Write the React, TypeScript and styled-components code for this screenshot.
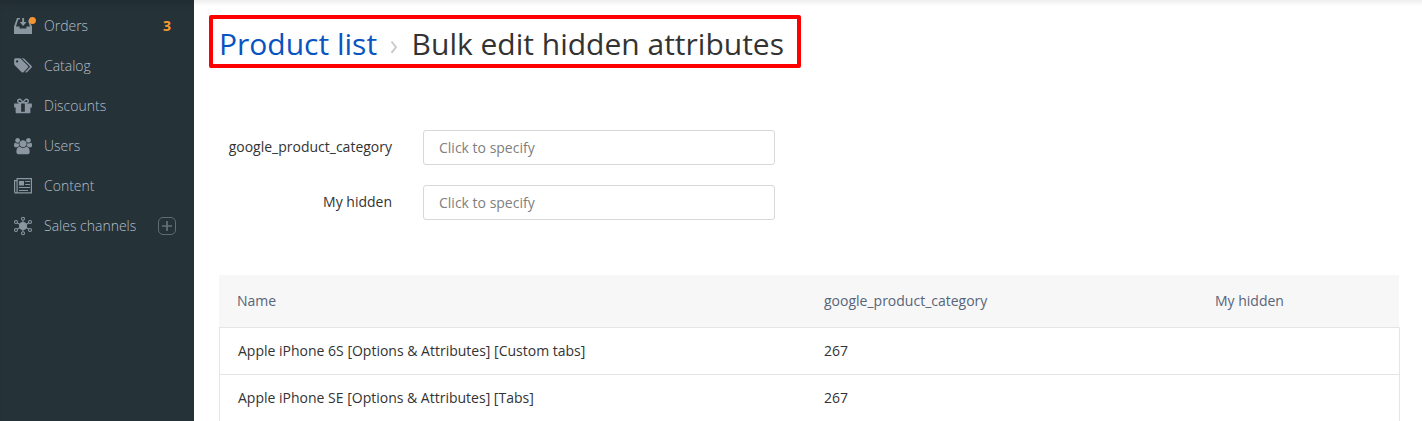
import React from "react";
import styled, { createGlobalStyle } from "styled-components";

const GlobalStyle = createGlobalStyle`
  * { box-sizing: border-box; }
  body {
    margin: 0;
    background: #fff;
    color: #333;
    font-family: "Open Sans", "Noto Sans", sans-serif;
    font-size: 14px;
    line-height: 20px;
    overflow: hidden;
  }
`;

const Page = styled.div`
  display: flex;
  height: 421px;
  overflow: hidden;
`;

const Sidebar = styled.nav`
  flex: none;
  width: 194px;
  padding-top: 6px;
  background: #253238;
  box-shadow: inset 0 8px 8px -6px rgba(0, 0, 0, 0.16);
`;

const NavItem = styled.a`
  display: flex;
  align-items: center;
  height: 40px;
  padding: 0 18px 0 14px;
  color: #b3bfc9;
  font-weight: 300;
`;

const NavIcon = styled.svg`
  flex: none;
  width: 20px;
  height: 20px;
  margin-right: 10px;
  fill: #8c96a0;
  color: #8c96a0;
  overflow: visible;
`;

const NavLabel = styled.span`
  flex: 1;
`;

const Counter = styled.span`
  margin-right: 5px;
  color: #f59b31;
  font-weight: 700;
`;

const AddButton = styled.span`
  display: flex;
  width: 18px;
  height: 18px;
  align-items: center;
  justify-content: center;
  border: 1px solid #606c74;
  border-radius: 5px;
`;

const Main = styled.main`
  flex: 1;
  min-width: 0;
  padding: 15px 22px 0 15px;
  background: linear-gradient(#eeeeee, #ffffff 6px);
`;

const Breadcrumb = styled.h1`
  display: flex;
  align-items: center;
  width: 592px;
  height: 53px;
  margin: 0;
  padding: 0 0 0 6px;
  border: 4px solid #f00;
  border-radius: 2px;
  font-size: 30px;
  line-height: 40px;
  font-weight: 400;
  white-space: nowrap;
`;

const Crumb = styled.span<{ $link?: boolean }>`
  padding-top: 4px;
  color: ${(p) => (p.$link ? "#0854c0" : "#333")};
`;

const Chevron = styled.svg`
  width: 8px;
  height: 14px;
  margin: 10px 13.5px 0 13px;
`;

const Form = styled.form`
  display: grid;
  gap: 20px;
  margin-top: 62px;
`;

const Field = styled.div`
  display: grid;
  grid-template-columns: 183px 352px;
  column-gap: 31px;
`;

const FieldLabel = styled.label`
  padding-top: 7px;
  text-align: right;
`;

const FieldInput = styled.div`
  height: 35px;
  padding: 7px 15px;
  border: 1px solid #d8d8d8;
  border-radius: 3px;
  color: #808080;
`;

const Table = styled.div`
  width: 1181px;
  margin: 55px 0 0 10px;
`;

const HeadRow = styled.div`
  display: grid;
  grid-template-columns: 587px 391px 1fr;
  align-items: center;
  width: 1180px;
  height: 52px;
  padding-left: 18px;
  background: #f7f7f7;
  color: #576479;
`;

const Row = styled.div`
  display: grid;
  grid-template-columns: 586px 391px 1fr;
  align-items: center;
  height: 47px;
  padding-left: 18px;
  border: 1px solid #e5e5e5;
  border-bottom: 0;
`;

const OrdersIcon = () => (
  <NavIcon viewBox="0 0 20 20">
    <path d="M0 10.6 3 2h3.2L5.6 3.4H4.2L2 10.4h3.6v2.2h6.8v-2.2H16L13.9 4.6h1.6L18 10.6V18H0z" />
    <path d="M8.2 2h1.9v4.1h2.5L9.1 9.9 5.7 6.1h2.5z" />
    <circle cx="18.4" cy="4.5" r="3.5" fill="#f79432" />
  </NavIcon>
);

const TagsIcon = () => (
  <NavIcon viewBox="0 0 20 20">
    <g transform="translate(-1.1 1.15) scale(.0094)">
      <path d="M576 448q0-53-37.5-90.5t-90.5-37.5-90.5 37.5-37.5 90.5 37.5 90.5 90.5 37.5 90.5-37.5 37.5-90.5zm1067 576q0 53-37 90l-491 492q-39 37-91 37-53 0-90-37l-715-716q-38-37-64.5-101t-26.5-117v-416q0-52 38-90t90-38h416q53 0 117 26.5t102 64.5l715 714q37 39 37 91zm384 0q0 53-37 90l-491 492q-39 37-91 37-36 0-59-14t-53-45l470-470q37-37 37-90 0-52-37-91l-715-714q-38-38-102-64.5t-117-26.5h224q53 0 117 26.5t102 64.5l715 714q37 39 37 91z" />
    </g>
  </NavIcon>
);

const GiftIcon = () => (
  <NavIcon viewBox="0 0 20 20">
    <g transform="translate(-1.35 .45) scale(.01155 .0109)">
      <path d="M1056 1356v-716h-320v716q0 25 18 38.5t46 13.5h192q28 0 46-13.5t18-38.5zm-456-844h195l-126-161q-26-31-69-31-40 0-68 28t-28 68 28 68 68 28zm688-96q0-40-28-68t-68-28q-43 0-69 31l-125 161h194q40 0 68-28t28-68zm376 256v320q0 14-9 23t-23 9h-96v416q0 40-28 68t-68 28h-1088q-40 0-68-28t-28-68v-416h-96q-14 0-23-9t-9-23v-320q0-14 9-23t23-9h440q-93 0-158.5-65.5t-65.5-158.5 65.5-158.5 158.5-65.5q107 0 168 77l128 165 128-165q61-77 168-77 93 0 158.5 65.5t65.5 158.5-65.5 158.5-158.5 65.5h440q14 0 23 9t9 23z" />
    </g>
  </NavIcon>
);

const UsersIcon = () => (
  <NavIcon viewBox="0 0 20 20">
    <g transform="translate(0 2) scale(.0094 .0091)">
      <path d="M593 896q-162 5-265 128h-134q-82 0-138-40.5t-56-118.5q0-353 124-353 6 0 43.5 21t97.5 42.5 119 21.5q67 0 133-23-5 37-5 66 0 139 81 256zm1071 637q0 120-73 189.5t-194 69.5h-874q-121 0-194-69.5t-73-189.5q0-53 3.5-103.5t14-109 26.5-108.5 43-97.5 62-81 85.5-53.5 111.5-20q10 0 43 21.5t73 48 107 48 135 21.5 135-21.5 107-48 73-48 43-21.5q61 0 111.5 20t85.5 53.5 62 81 43 97.5 26.5 108.5 14 109 3.5 103.5zm-1024-1277q0 106-75 181t-181 75-181-75-75-181 75-181 181-75 181 75 75 181zm704 384q0 159-112.5 271.5t-271.5 112.5-271.5-112.5-112.5-271.5 112.5-271.5 271.5-112.5 271.5 112.5 112.5 271.5zm576 225q0 78-56 118.5t-138 40.5h-134q-103-123-265-128 81-117 81-256 0-29-5-66 66 23 133 23 59 0 119-21.5t97.5-42.5 43.5-21q124 0 124 353zm-128-609q0 106-75 181t-181 75-181-75-75-181 75-181 181-75 181 75 75 181z" />
    </g>
  </NavIcon>
);

const NewsIcon = () => (
  <NavIcon viewBox="0 0 20 20">
    <path
      d="M3.1 4.6H.6V15.8a1.2 1.2 0 0 0 2.5 0V2.6h14.3v14.2H1.8"
      fill="none"
      stroke="currentColor"
      strokeWidth="1.2"
    />
    <path d="M5 5h5v4.6H5zM11.2 5H16v1h-4.8zM11.2 8H16v1h-4.8zM5 11h11v1H5zM5 14h9v1H5z" />
  </NavIcon>
);

const HubIcon = () => (
  <NavIcon viewBox="0 0 20 20">
    <circle cx="9" cy="10" r="4" />
    <g fill="none" stroke="currentColor" strokeWidth="1.1">
      <path d="M9 4.4v3M9 12.6v3M3.4 7 6 8.4M14.6 7 12 8.4M3.4 13 6 11.6M14.6 13 12 11.6" />
      <circle cx="9" cy="2.8" r="1.5" />
      <circle cx="9" cy="17.2" r="1.5" />
      <circle cx="2" cy="6" r="1.5" />
      <circle cx="16" cy="6" r="1.5" />
      <circle cx="2" cy="14" r="1.5" />
      <circle cx="16" cy="14" r="1.5" />
    </g>
  </NavIcon>
);

const navItems = [
  { label: "Orders", Icon: OrdersIcon, count: 3 },
  { label: "Catalog", Icon: TagsIcon },
  { label: "Discounts", Icon: GiftIcon },
  { label: "Users", Icon: UsersIcon },
  { label: "Content", Icon: NewsIcon },
  { label: "Sales channels", Icon: HubIcon, addable: true },
];

const fields = ["google_product_category", "My hidden"];

const products = [
  { name: "Apple iPhone 6S [Options & Attributes] [Custom tabs]", category: "267" },
  { name: "Apple iPhone SE [Options & Attributes] [Tabs]", category: "267" },
];

export default function App() {
  return (
    <>
      <GlobalStyle />
      <Page>
        <Sidebar>
          {navItems.map(({ label, Icon, count, addable }) => (
            <NavItem key={label}>
              <Icon />
              <NavLabel>{label}</NavLabel>
              {count && <Counter>{count}</Counter>}
              {addable && (
                <AddButton>
                  <svg width="10" height="10" viewBox="0 0 10 10">
                    <path d="M5 0v10M0 5h10" stroke="#66727a" strokeWidth="1.7" />
                  </svg>
                </AddButton>
              )}
            </NavItem>
          ))}
        </Sidebar>
        <Main>
          <Breadcrumb>
            <Crumb $link>Product list</Crumb>
            <Chevron viewBox="0 0 8 14">
              <path d="M1.5 1.5 6 7.2l-4.5 5.7" fill="none" stroke="#ccc" strokeWidth="2" />
            </Chevron>
            <Crumb>Bulk edit hidden attributes</Crumb>
          </Breadcrumb>
          <Form>
            {fields.map((field) => (
              <Field key={field}>
                <FieldLabel>{field}</FieldLabel>
                <FieldInput>Click to specify</FieldInput>
              </Field>
            ))}
          </Form>
          <Table>
            <HeadRow>
              <span>Name</span>
              <span>google_product_category</span>
              <span>My hidden</span>
            </HeadRow>
            {products.map((product) => (
              <Row key={product.name}>
                <span>{product.name}</span>
                <span>{product.category}</span>
              </Row>
            ))}
          </Table>
        </Main>
      </Page>
    </>
  );
}
